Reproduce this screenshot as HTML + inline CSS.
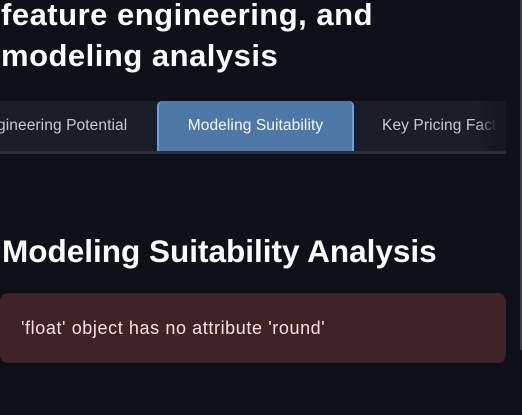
<!DOCTYPE html>
<html><head><style>
body{margin:0;width:522px;height:415px;background:#0e1117;overflow:hidden;font-family:"Liberation Sans",sans-serif;position:relative;color:#fafafa}
.t{position:absolute;left:1px;font-weight:bold;font-size:31px;line-height:36px;white-space:nowrap;letter-spacing:0.5px}
.tabs{position:absolute;left:0;top:101px;width:506px;height:53px;background:#1b1e29;border-bottom:3px solid #2b2e38;box-sizing:border-box;overflow:hidden}
.tab{position:absolute;top:0;height:50px;line-height:50px;font-size:15.5px;color:#c8cad0;white-space:nowrap;letter-spacing:0.1px}
.act{left:157px;width:197px;background:#4e79a7;color:#f4f6fa;text-align:center;border-radius:5px 5px 0 0;height:53px;top:0;border-left:2px solid #6aa0e0;border-right:2px solid #6aa0e0;box-sizing:border-box}
.fade{position:absolute;left:476px;top:101px;width:30px;height:50px;background:linear-gradient(90deg,rgba(27,30,41,0),#151820 70%)}
h2{position:absolute;left:2px;top:231px;margin:0;font-size:31.5px;line-height:40px;font-weight:bold;white-space:nowrap;letter-spacing:0px}
.err{position:absolute;left:0;top:293px;width:506px;height:70px;background:#3e2428;border-radius:8px;color:#ffdedf;font-size:18px;line-height:70px;padding-left:21px;box-sizing:border-box;letter-spacing:0.6px}
.sb{position:absolute;left:520px;top:0;width:2px;height:350px;background:#3a3d45}
</style></head><body>
<div class="t" style="top:-3px">feature engineering, and</div>
<div class="t" style="top:38px">modeling analysis</div>
<div class="tabs">
<div class="tab" style="left:-3px">gineering Potential</div>
<div class="tab act">Modeling Suitability</div>
<div class="tab" style="left:382px">Key Pricing Factors</div>
</div>
<div class="fade"></div>
<h2>Modeling Suitability Analysis</h2>
<div class="err">'float' object has no attribute 'round'</div>
<div class="sb"></div>
</body></html>
